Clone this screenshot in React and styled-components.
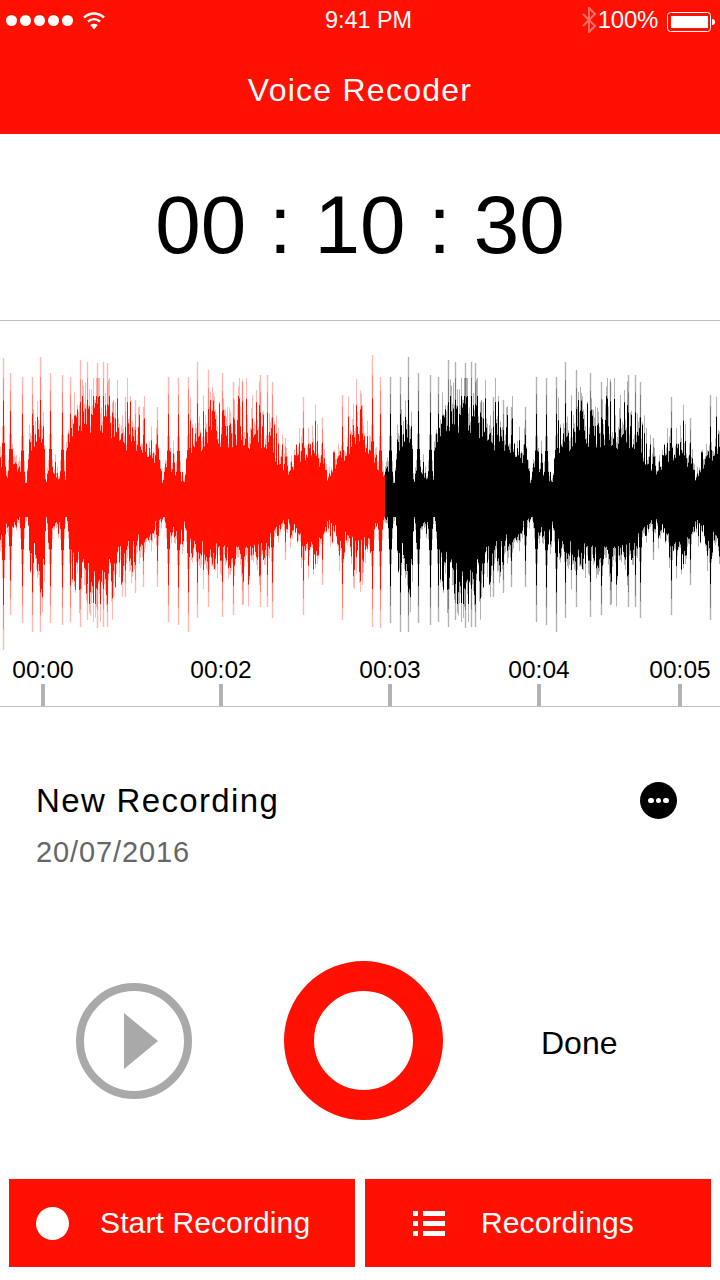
import styled, { createGlobalStyle } from 'styled-components';

const RED = '#ff1000';

const GlobalStyle = createGlobalStyle`
  html, body {
    margin: 0;
    padding: 0;
    background: #fff;
  }
  body {
    font-family: "Liberation Sans", Arial, sans-serif;
    color: #000;
  }
`;

const Screen = styled.div`
  width: 720px;
  height: 1280px;
  overflow: hidden;
  background: #fff;
`;

const Header = styled.header`
  height: 134px;
  background: ${RED};
  color: #fff;
`;

const StatusBar = styled.div`
  height: 40px;
  display: grid;
  grid-template-columns: 1fr auto 1fr;
  align-items: center;
  padding: 0 5px 0 6px;
  font-size: 24px;
`;

const StatusLeft = styled.div`
  display: flex;
  align-items: center;
  gap: 3px;
`;

const Dot = styled.span`
  width: 11px;
  height: 11px;
  border-radius: 50%;
  background: #fff;
`;

const StatusTime = styled.span`
  margin-left: 16px;
  font-size: 23.4px;
`;

const StatusRight = styled.div`
  display: flex;
  align-items: center;
  justify-content: flex-end;
`;

const Percent = styled.span`
  margin: 0 9px 0 1px;
  letter-spacing: -0.3px;
`;

const Battery = styled.span`
  width: 48px;
  height: 20px;
  display: block;
`;

const Title = styled.h1`
  margin: 0;
  height: 94px;
  line-height: 100px;
  text-align: center;
  font-size: 32px;
  font-weight: 400;
  letter-spacing: 1.25px;
`;

const TimerRow = styled.div`
  height: 182px;
  padding-bottom: 4px;
  display: flex;
  align-items: center;
  justify-content: center;
  border-bottom: 1px solid #bdbdbd;
  font-size: 81.8px;
  letter-spacing: 0;
`;

const WaveSvg = styled.svg`
  display: block;
  width: 720px;
  height: 334px;
`;

const WaveStroke = styled.path`
  fill: none;
  stroke: ${(p) => p.$tone};
  stroke-width: ${(p) => p.$width}px;
  stroke-opacity: ${(p) => p.$alpha};
`;

const Ruler = styled.div`
  height: 51px;
  display: grid;
  grid-template-columns: 86px 270px 68px 230px 52px;
  border-bottom: 1px solid #bdbdbd;
`;

const Mark = styled.div`
  display: flex;
  flex-direction: column;
  align-items: center;
  justify-content: flex-end;
  white-space: nowrap;
  font-size: 24.5px;
`;

const MarkLabel = styled.span`
  line-height: 28px;
`;

const Tick = styled.span`
  width: 4px;
  height: 22px;
  background: #b3b3b3;
`;

const Info = styled.section`
  height: 254px;
  box-sizing: border-box;
  padding: 74px 43px 0 36px;
  display: flex;
  justify-content: space-between;
  align-items: flex-start;
`;

const InfoName = styled.div`
  font-size: 33px;
  line-height: 40px;
  letter-spacing: 1.35px;
`;

const InfoDate = styled.div`
  margin-top: 11px;
  font-size: 29px;
  line-height: 40px;
  letter-spacing: 0.9px;
  color: #666;
`;

const MoreButton = styled.span`
  width: 37px;
  height: 37px;
  margin-top: 1px;
  border-radius: 50%;
  background: #000;
  display: flex;
  align-items: center;
  justify-content: center;
  gap: 2px;
`;

const MoreDot = styled.span`
  width: 5.5px;
  height: 5.5px;
  border-radius: 50%;
  background: #fff;
`;

const Controls = styled.div`
  height: 159px;
  padding-left: 76px;
  display: flex;
  align-items: center;
  gap: 92px;
`;

const PlayButton = styled.span`
  width: 116px;
  height: 116px;
  box-sizing: border-box;
  border: 8px solid #a9a9a9;
  border-radius: 50%;
  display: flex;
  align-items: center;
  justify-content: center;
`;

const PlayTriangle = styled.span`
  width: 0;
  height: 0;
  margin-left: 13px;
  border-style: solid;
  border-width: 28px 0 28px 34px;
  border-color: transparent transparent transparent #a9a9a9;
`;

const RecordButton = styled.span`
  width: 159px;
  height: 159px;
  box-sizing: border-box;
  border: 30px solid ${RED};
  border-radius: 50%;
`;

const DoneLabel = styled.span`
  margin: 4px 0 0 6px;
  font-size: 32px;
  line-height: 40px;
`;

const Footer = styled.footer`
  margin-top: 59px;
  padding: 0 9px;
  display: grid;
  grid-template-columns: 346px 346px;
  gap: 10px;
`;

const FooterButton = styled.div`
  height: 88px;
  box-sizing: border-box;
  padding-left: ${(p) => p.$inset}px;
  background: ${RED};
  color: #fff;
  display: flex;
  align-items: center;
  gap: ${(p) => p.$gap}px;
  font-size: 30px;
  letter-spacing: 0.12px;
`;

const RecordDot = styled.span`
  width: 33px;
  height: 33px;
  border-radius: 50%;
  background: #fff;
`;

const ListIcon = styled.span`
  display: grid;
  grid-template-columns: 5px 22px;
  column-gap: 5px;
  row-gap: 5px;
`;

const ListBar = styled.span`
  height: 5px;
  background: #fff;
`;

// amplitude outline of the wave, traced from the picture as [x, amp] in px
const TOP_BODY = [
  [0, 34], [7, 26], [13, 44], [20, 38], [27, 18], [30, 62], [43, 78], [46, 18], [49, 42], [65, 18],
  [68, 84], [90, 108], [107, 108], [117, 80], [133, 78], [160, 44], [163, 18], [167, 42], [173, 42],
  [185, 18], [188, 72], [213, 84], [233, 84], [267, 76], [285, 42], [290, 34], [313, 72], [327, 30],
  [353, 78], [370, 72], [377, 38], [385, 26],
];
const BOTTOM_BODY = [
  [0, 36], [27, 18], [30, 60], [43, 84], [46, 20], [49, 40], [67, 18], [70, 70], [103, 100], [117, 74],
  [133, 60], [160, 28], [163, 18], [173, 40], [187, 32], [190, 60], [233, 72], [267, 60], [285, 24],
  [317, 68], [328, 30], [360, 66], [377, 26], [385, 20],
];
// tall single peaks as [x, up, down]
const SPIKES = [
  [3, 142, 150], [10, 127, 115], [22, 123, 123], [32, 123, 132], [40, 143, 132], [50, 127, 123],
  [62, 125, 125], [70, 123, 122], [80, 140, 127], [87, 138, 120], [97, 137, 128], [103, 138, 127],
  [107, 137, 127], [113, 100, 97], [125, 103, 97], [135, 100, 93], [143, 93, 87], [157, 93, 87],
  [168, 123, 122], [178, 122, 125], [188, 123, 132], [197, 138, 118], [208, 130, 107], [222, 127, 117],
  [233, 118, 115], [242, 118, 105], [260, 125, 107], [267, 125, 107], [272, 118, 118], [285, 62, 60],
  [303, 103, 115], [322, 82, 85], [342, 105, 120], [362, 95, 85], [372, 145, 127], [380, 123, 128],
];

const interp = (points, x) => {
  for (let i = 1; i < points.length; i += 1) {
    if (x <= points[i][0]) {
      const [x0, y0] = points[i - 1];
      const [x1, y1] = points[i];
      return y0 + ((y1 - y0) * (x - x0)) / (x1 - x0);
    }
  }
  return points[points.length - 1][1];
};

const random = (() => {
  let seed = 20716;
  return () => {
    seed = (seed * 16807) % 2147483647;
    return seed / 2147483647;
  };
})();

// each peak pulls the wave up around it, so it grows out of the body
const skirt = (x, side, scale, reach) => {
  let amp = 0;
  SPIKES.forEach((s) => {
    const v = s[side] * scale * Math.exp(-Math.abs(x - s[0] - 0.5) / reach);
    if (v > amp) amp = v;
  });
  return amp;
};

// mostly small teeth, with a taller one every few columns
const jitter = () => (random() < 0.22 ? 1 + random() * 0.3 : 0.62 + random() * 0.36);

const CENTER = 179;
const SOLID_LIMIT = 104;
const FAINT_LIMIT = 122;

const columns = [];
for (let x = 0; x < 385; x += 1) {
  const cx = x + 0.5;
  const top = interp(TOP_BODY, cx);
  const bottom = interp(BOTTOM_BODY, cx);
  const topSolid = Math.max(17, Math.min(SOLID_LIMIT, top * jitter()), skirt(cx, 1, 0.7, 1.8));
  const bottomSolid = Math.max(17, Math.min(SOLID_LIMIT, bottom * jitter()), skirt(cx, 2, 0.7, 1.8));
  columns.push({
    x: cx,
    top: topSolid,
    bottom: bottomSolid,
    topFaint: Math.max(Math.min(FAINT_LIMIT, topSolid * (1 + random() * 0.3)), skirt(cx, 1, 0.86, 2)),
    bottomFaint: Math.max(Math.min(FAINT_LIMIT, bottomSolid * (1 + random() * 0.3)), skirt(cx, 2, 0.86, 2)),
  });
}

const colRange = (top, bottom, from, to, shift) =>
  columns
    .filter((c) => c.x >= from && c.x + shift < to)
    .map((c) => `M${c.x + shift} ${(CENTER - c[top]).toFixed(1)}V${(CENTER + c[bottom]).toFixed(1)}`)
    .join('');

const spikeRange = (from, to, shift) =>
  SPIKES.filter((s) => s[0] >= from && s[0] + shift < to)
    .map((s) => `M${s[0] + shift + 0.5} ${CENTER - s[1]}V${CENTER + s[2]}`)
    .join('');

function WaveLayer({ tone, from, to, shift }) {
  return (
    <>
      <WaveStroke $tone={tone} $width={1} $alpha={0.3} d={colRange('topFaint', 'bottomFaint', from, to, shift)} />
      <WaveStroke $tone={tone} $width={1.4} $alpha={0.3} d={spikeRange(from, to, shift)} />
      <WaveStroke $tone={tone} $width={1} $alpha={1} d={colRange('top', 'bottom', from, to, shift)} />
    </>
  );
}

const MARKS = ['00:00', '00:02', '00:03', '00:04', '00:05'];

export default function App() {
  return (
    <Screen>
      <GlobalStyle />
      <Header>
        <StatusBar>
          <StatusLeft>
            <Dot />
            <Dot />
            <Dot />
            <Dot />
            <Dot />
            <svg width="24" height="20" viewBox="0 0 24 20" style={{ marginLeft: 6 }}>
              <g fill="none" stroke="#fff" strokeWidth="2.6">
                <path d="M2 7.5 C8 2.2 16 2.2 22 7.5" />
                <path d="M6 11.5 C9.6 8.5 14.4 8.5 18 11.5" />
              </g>
              <path d="M8.2 15 C10.6 13.2 13.4 13.2 15.8 15 L12 19.5 Z" fill="#fff" />
            </svg>
          </StatusLeft>
          <StatusTime>9:41 PM</StatusTime>
          <StatusRight>
            <svg width="16" height="26" viewBox="0 0 16 26">
              <path
                d="M2 7 L14 19 L8 25 V1 L14 7 L2 19"
                fill="none"
                stroke="#fff"
                strokeOpacity="0.4"
                strokeWidth="2"
              />
            </svg>
            <Percent>100%</Percent>
            <Battery>
              <svg width="48" height="20" viewBox="0 0 48 20">
                <rect x="0.5" y="0.5" width="43" height="19" rx="3" fill="none" stroke="#fff" />
                <rect x="4" y="4" width="37" height="12" fill="#fff" />
                <path d="M45 7 C47 7 48 8 48 10 C48 12 47 13 45 13 Z" fill="#fff" />
              </svg>
            </Battery>
          </StatusRight>
        </StatusBar>
        <Title>Voice Recoder</Title>
      </Header>

      <TimerRow>00 : 10 : 30</TimerRow>

      <WaveSvg viewBox="0 0 720 334">
        <WaveLayer tone={RED} from={0} to={385} shift={0} />
        <WaveLayer tone="#000" from={17} to={720} shift={368} />
      </WaveSvg>

      <Ruler>
        {MARKS.map((mark) => (
          <Mark key={mark}>
            <MarkLabel>{mark}</MarkLabel>
            <Tick />
          </Mark>
        ))}
      </Ruler>

      <Info>
        <div>
          <InfoName>New Recording</InfoName>
          <InfoDate>20/07/2016</InfoDate>
        </div>
        <MoreButton>
          <MoreDot />
          <MoreDot />
          <MoreDot />
        </MoreButton>
      </Info>

      <Controls>
        <PlayButton>
          <PlayTriangle />
        </PlayButton>
        <RecordButton />
        <DoneLabel>Done</DoneLabel>
      </Controls>

      <Footer>
        <FooterButton $inset={27} $gap={31}>
          <RecordDot />
          Start Recording
        </FooterButton>
        <FooterButton $inset={48} $gap={36}>
          <ListIcon>
            <ListBar />
            <ListBar />
            <ListBar />
            <ListBar />
            <ListBar />
            <ListBar />
          </ListIcon>
          Recordings
        </FooterButton>
      </Footer>
    </Screen>
  );
}
